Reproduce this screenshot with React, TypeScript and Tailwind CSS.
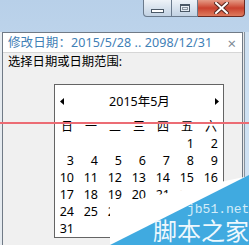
import React from "react";

const days: (number | null)[] = [
  null, null, null, null, null, 1, 2,
  3, 4, 5, 6, 7, 8, 9,
  10, 11, 12, 13, 14, 15, 16,
  17, 18, 19, 20, 21, 22, 23,
  24, 25, 26, 27, 28, 29, 30,
  31, null, null, null, null, null, null,
];

const weekdays = ["日", "一", "二", "三", "四", "五", "六"];

export default function App() {
  return (
    <div className="relative w-[249px] h-[245px] overflow-hidden bg-linear-to-b from-[#b8d0e9] to-[#d8e6f4] font-['Noto_Sans','Noto_Sans_CJK_SC',sans-serif] text-[12px] text-black">
      {/* top window caption buttons */}
      <div className="h-[32px] flex justify-end pr-[4px]">
        <div className="flex h-[17px]">
          <div className="w-[29px] h-full border border-t-0 border-[#6a7a8c] rounded-bl-[4px] bg-linear-to-b from-[#eef3f8] to-[#c2d2e3] flex items-end justify-center pb-[3px]">
            <div className="w-[13px] h-[4px] bg-white border border-[#4a5866]" />
          </div>
          <div className="w-[26px] h-full border border-t-0 border-l-0 border-[#6a7a8c] bg-linear-to-b from-[#eef3f8] to-[#c2d2e3] flex items-center justify-center">
            <div className="w-[10px] h-[8px] border border-[#4a5866] border-t-[2px] bg-white/40 flex items-center justify-center">
              <div className="w-[6px] h-[3px] border border-[#4a5866]/60" />
            </div>
          </div>
          <div className="w-[47px] h-full border border-t-0 border-l-0 border-[#6b2a22] rounded-br-[4px] bg-linear-to-b from-[#e49a86] via-[#c9402e] to-[#de7a5e] flex items-center justify-center">
            <svg width="15" height="12" viewBox="0 0 15 12">
              <path d="M2 1 L13 11 M13 1 L2 11" stroke="#5a2a22" strokeWidth="4" strokeLinecap="square" />
              <path d="M2 1 L13 11 M13 1 L2 11" stroke="#ffffff" strokeWidth="2" strokeLinecap="square" />
            </svg>
          </div>
        </div>
      </div>

      {/* main area */}
      <div className="flex h-[213px]">
        <div className="w-[2px] bg-[#e6ebf0]" />
        <div className="w-[241px] flex flex-col border-l border-t border-r border-[#707a86] bg-[#f0f0f0]">
          <div className="h-[20px] shrink-0 bg-white flex items-center pl-[5px] pr-[6px] border-b border-[#d6d6d6]">
            <span className="text-[#3f80b6] text-[12.5px] tracking-[0.1px] leading-[20px] whitespace-nowrap">修改日期：2015/5/28 .. 2098/12/31</span>
            <span className="ml-auto text-[#7f8b96] text-[15px] leading-[20px]">×</span>
          </div>
          <div className="h-[17px] leading-[17px] pl-[5px] text-[12.3px] whitespace-nowrap">选择日期或日期范围:</div>
          <div className="mt-[14px] ml-[51px] w-[170px] h-[154px] border border-[#646464] bg-white flex flex-col">
            <div className="h-[33px] shrink-0 flex items-center justify-between pl-[5px] pr-[4px]">
              <svg width="4" height="7" viewBox="0 0 4 7">
                <path d="M4 0 L0 3.5 L4 7 Z" fill="#000" />
              </svg>
              <span className="leading-[16px] text-[12.5px]">2015年5月</span>
              <svg width="4" height="7" viewBox="0 0 4 7">
                <path d="M0 0 L4 3.5 L0 7 Z" fill="#000" />
              </svg>
            </div>
            <div className="grid grid-cols-[repeat(7,24px)]">
              {weekdays.map((w) => (
                <div key={w} className="h-[17px] leading-[17px] text-center">
                  {w}
                </div>
              ))}
              {days.map((d, i) => (
                <div key={i} className="h-[17px] leading-[17px] text-right pr-[5px] text-[12.5px]">
                  {d ?? ""}
                </div>
              ))}
            </div>
          </div>
        </div>
        <div className="w-[1px] bg-[#e8e8e8]" />
        <div className="w-[1px] bg-[#86929e]" />
        <div className="w-[4px] bg-[#cfe1f2]" />
      </div>

      {/* red annotation line */}
      <div className="absolute left-0 top-[122px] w-[249px] h-[2px] bg-[#ec6c74]" />

      {/* watermark */}
      <div className="absolute inset-0 pointer-events-none">
        <svg className="absolute left-0 top-0" width="249" height="245" viewBox="0 0 249 245">
          <polygon points="110,245 110,205 249,176 249,245" fill="#ffffff" />
          <polygon points="110,245 249,175 249,245" fill="#40aae0" />
        </svg>
        <span className="absolute left-[187px] top-[202px] font-['Liberation_Mono',monospace] text-[13px] leading-[16px] text-[#d2ecf9] whitespace-nowrap">
          jb51.net
        </span>
        <span className="absolute left-[153px] top-[216px] font-['Noto_Sans_CJK_SC',sans-serif] text-[24px] leading-[28px] text-[#eef8fd] whitespace-nowrap">
          脚本之家
        </span>
      </div>
    </div>
  );
}
